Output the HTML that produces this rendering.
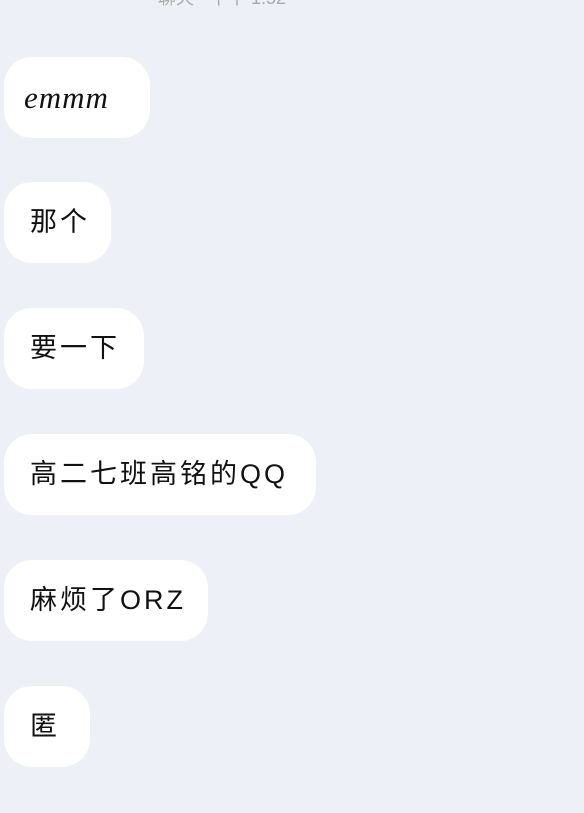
<!DOCTYPE html>
<html><head><meta charset="utf-8"><style>
html,body{margin:0;padding:0;width:584px;height:813px;background:#edf1f7;overflow:hidden;position:relative;font-family:"Liberation Sans","Noto Sans CJK SC",sans-serif;}
.b{position:absolute;left:4px;height:81px;background:#fff;border-radius:28px;color:#111;font-size:27px;line-height:81px;padding-left:26px;box-sizing:border-box;white-space:nowrap;letter-spacing:3px;}
.b.i{font-style:italic;font-family:"Liberation Serif","Noto Sans CJK SC",serif;font-size:31px;letter-spacing:1px;padding-left:20px;}
.top{position:absolute;left:158px;top:-16px;color:#aaa;font-size:18px;}
</style></head><body>
<div class="top">聊天 · 下午 1:52</div>
<div class="b i" style="top:57px;width:146px">emmm</div>
<div class="b" style="top:182px;width:107px">那个</div>
<div class="b" style="top:308px;width:140px">要一下</div>
<div class="b" style="top:434px;width:312px">高二七班高铭的QQ</div>
<div class="b" style="top:560px;width:204px">麻烦了ORZ</div>
<div class="b" style="top:686px;width:86px">匿</div>
</body></html>
